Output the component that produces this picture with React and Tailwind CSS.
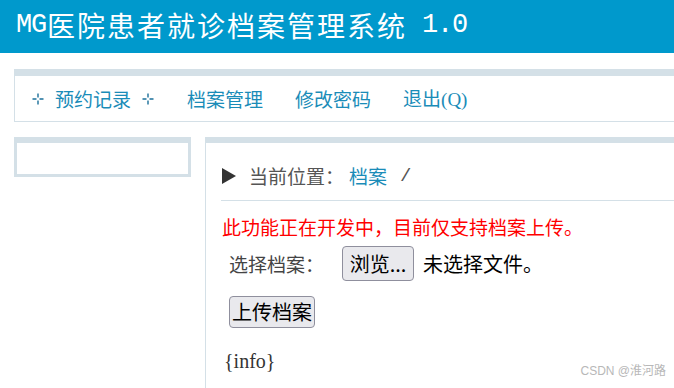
import React from "react";

const CJK = '"Noto Sans CJK SC", "Liberation Sans", sans-serif';
const MONO = '"Liberation Mono", "Noto Sans CJK SC", monospace';
const SERIF = '"Liberation Serif", "Noto Sans CJK SC", serif';

function Cross() {
  return (
    <svg width="12" height="12" viewBox="0 0 12 12" className="shrink-0">
      <path d="M6 0.5v4M6 7.5v4M0.5 6h4M7.5 6h4" stroke="#1a6f9a" strokeWidth="1.4" fill="none" />
    </svg>
  );
}

export default function App() {
  return (
    <div
      className="relative w-full h-[388px] overflow-hidden bg-white"
      style={{ fontFamily: CJK }}
    >
      {/* Header */}
      <div className="h-[53px] bg-[#0099cc] pl-[16px] pb-[3px] flex items-center text-white whitespace-nowrap">
        <span className="text-[27px] leading-[30px] tracking-[-1.2px]" style={{ fontFamily: MONO }}>MG</span>
        <span className="ml-[1px] text-[28px] leading-[30px] tracking-[2px]">医院患者就诊档案管理系统</span>
        <span className="text-[27px] leading-[30px] tracking-[-1.2px]" style={{ fontFamily: MONO }}>&nbsp;1.0</span>
      </div>

      {/* Nav */}
      <div className="mt-[16px] ml-[14px] border border-t-[7px] border-[#d4e0e7] border-r-0">
        <div className="h-[45px] flex items-center pl-[17px] text-[19px] leading-[22px] text-[#1a8cb8] whitespace-nowrap">
          <Cross />
          <span className="ml-[11px]">预约记录</span>
          <span className="ml-[11px]"><Cross /></span>
          <span className="ml-[33px]">档案管理</span>
          <span className="ml-[32px]">修改密码</span>
          <span className="ml-[32px]">
            退出<span style={{ fontFamily: SERIF }}>(Q)</span>
          </span>
        </div>
      </div>

      {/* Body */}
      <div className="mt-[15px] flex items-start">
        <div className="ml-[14px] w-[177px] h-[40px] border-[3px] border-t-[6px] border-[#d4e0e7]" />

        <div className="ml-[14px] flex-1 h-[251px] border-l border-t-[6px] border-[#d4e0e7]">
          <div className="pl-[16px]">
            {/* Breadcrumb */}
            <div className="pt-[22px] flex items-center h-[44px] text-[19px] leading-[22px] whitespace-nowrap">
              <svg width="14" height="16" viewBox="0 0 14 16" className="shrink-0">
                <path d="M0 0L14 8L0 16Z" fill="#333333" />
              </svg>
              <span className="ml-[13px] text-[#555555]">当前位置：</span>
              <span className="ml-[5px] text-[#1a8cb8]">档案</span>
              <span className="ml-[13px] text-[#555555]" style={{ fontFamily: MONO }}>/</span>
            </div>
          </div>

          <div className="mt-[13px] ml-[15px] h-px bg-[#d4e0e7]" />

          <div className="pl-[16px]">
            <div className="mt-[15px] text-[19px] leading-[22px] text-[#ff0000] whitespace-nowrap">
              此功能正在开发中，目前仅支持档案上传。
            </div>

            <div className="mt-[8px] ml-[7px] flex items-center whitespace-nowrap">
              <span className="text-[19px] leading-[22px] text-[#444444] w-[113px]">选择档案：</span>
              <button className="h-[35px] w-[72px] rounded-[4px] border border-[#8f8f9d] bg-[#e9e9ed] text-[20px] leading-[22px] text-black flex items-center justify-center">
                浏览...
              </button>
              <span className="ml-[9px] text-[20px] leading-[22px] text-black">未选择文件。</span>
            </div>

            <div className="mt-[15px] ml-[7px]">
              <button className="h-[32px] w-[86px] rounded-[4px] border border-[#8f8f9d] bg-[#e9e9ed] text-[20px] leading-[22px] text-black flex items-center justify-center">
                上传档案
              </button>
            </div>

            <div
              className="mt-[23px] ml-[2px] text-[20px] leading-[20px] text-[#333333]"
              style={{ fontFamily: SERIF }}
            >
              {"{info}"}
            </div>
          </div>
        </div>
      </div>

      {/* Watermark */}
      <div
        className="absolute right-[8px] bottom-[11px] text-[12px] leading-[12px] text-[#b8b8b8] whitespace-nowrap"
        style={{ fontFamily: '"Liberation Sans", "Noto Sans CJK SC", sans-serif' }}
      >
        CSDN @淮河路
      </div>
    </div>
  );
}
